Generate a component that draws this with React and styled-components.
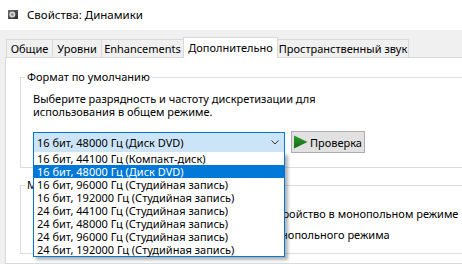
import React from 'react'
import styled, { createGlobalStyle } from 'styled-components'

const GlobalStyle = createGlobalStyle`
  * { box-sizing: border-box; }
  body {
    margin: 0;
    background: #ffffff;
    font-family: 'Noto Sans', 'Segoe UI', sans-serif;
    font-size: 11px;
    color: #000000;
  }
`

const tabs = [
  { label: 'Общие', width: 47 },
  { label: 'Уровни', width: 50 },
  { label: 'Enhancements', width: 83 },
  { label: 'Дополнительно', width: 95, active: true },
  { label: 'Пространственный звук', width: 132 },
]

const formats = [
  '16 бит, 44100 Гц (Компакт-диск)',
  '16 бит, 48000 Гц (Диск DVD)',
  '16 бит, 96000 Гц (Студийная запись)',
  '16 бит, 192000 Гц (Студийная запись)',
  '24 бит, 44100 Гц (Студийная запись)',
  '24 бит, 48000 Гц (Студийная запись)',
  '24 бит, 96000 Гц (Студийная запись)',
  '24 бит, 192000 Гц (Студийная запись)',
]

const Window = styled.div`
  width: 520px;
  height: 264px;
  overflow: hidden;
  display: flex;
  flex-direction: column;
`

const TitleBar = styled.div`
  height: 30px;
  flex-shrink: 0;
  background: #ffffff;
  display: flex;
  align-items: center;
  gap: 9px;
  padding-left: 8px;
  padding-bottom: 1px;
  font-size: 11.5px;
`

const Body = styled.div`
  flex: 1;
  background: #f0f0f0;
  padding: 7px 0 0 5px;
  display: flex;
  flex-direction: column;
`

const TabRow = styled.div`
  display: flex;
  align-items: flex-end;
  height: 20px;
  padding-left: 1px;
  position: relative;
  z-index: 1;
`

const Tab = styled.div`
  width: ${p => p.width}px;
  height: ${p => (p.active ? 21 : 18)}px;
  margin-left: -1px;
  margin-bottom: ${p => (p.active ? -1 : 0)}px;
  background: ${p => (p.active ? '#ffffff' : '#f0f0f0')};
  border: 1px solid #d9d9d9;
  border-bottom: none;
  display: flex;
  align-items: center;
  justify-content: center;
  line-height: 14px;
  white-space: nowrap;
  &:first-child { margin-left: 0; }
`

const Panel = styled.div`
  flex: 1;
  background: #ffffff;
  border: 1px solid #d9d9d9;
  padding: 0 0 0 14px;
`

const Group = styled.fieldset`
  margin: ${p => p.top}px 0 0 0;
  width: 470px;
  border: 1px solid #dcdcdc;
  padding: ${p => p.pad};
  min-inline-size: 0;
`

const Legend = styled.legend`
  margin-left: -8px;
  padding: 0 2px;
  line-height: 14px;
  white-space: nowrap;
`

const Description = styled.div`
  line-height: 13px;
`

const FormatRow = styled.div`
  display: flex;
  align-items: center;
  gap: 6px;
  margin-top: 13px;
`

const Combo = styled.div`
  position: relative;
  width: 252px;
  height: 21px;
  background: #cce4f7;
  border: 1px solid #0078d7;
  display: flex;
  align-items: center;
  justify-content: space-between;
  padding: 0 5px 0 3px;
  white-space: nowrap;
`

const List = styled.div`
  position: absolute;
  left: -1px;
  top: 100%;
  width: 252px;
  background: #ffffff;
  border: 1px solid #0078d7;
  border-top: none;
  box-shadow: 3px 3px 3px rgba(0, 0, 0, 0.3);
  z-index: 5;
`

const Option = styled.div`
  height: 13px;
  line-height: 13px;
  padding-left: 3px;
  white-space: nowrap;
  background: ${p => (p.selected ? '#0078d7' : 'transparent')};
  color: ${p => (p.selected ? '#ffffff' : '#000000')};
`

const TestButton = styled.div`
  width: 74px;
  height: 22px;
  background: #e1e1e1;
  border: 1px solid #adadad;
  display: flex;
  align-items: center;
  gap: 2px;
  padding-left: 1px;
  white-space: nowrap;
`

const CheckRow = styled.label`
  display: flex;
  align-items: center;
  gap: 5px;
  height: 14px;
  white-space: nowrap;
  & + & { margin-top: 7px; }
`

const Box = styled.span`
  width: 13px;
  height: 13px;
  border: 1px solid #333333;
  background: #ffffff;
  flex-shrink: 0;
`

function SpeakerIcon() {
  return (
    <svg width="10" height="9" viewBox="0 0 10 9">
      <defs>
        <linearGradient id="sp" x1="0" y1="0" x2="1" y2="1">
          <stop offset="0" stopColor="#6a6a6a" />
          <stop offset="1" stopColor="#2e2e2e" />
        </linearGradient>
      </defs>
      <rect x="0" y="0" width="10" height="9" fill="url(#sp)" />
      <circle cx="4.3" cy="4.6" r="3" fill="#d6d6d6" />
      <circle cx="4.3" cy="4.6" r="1.4" fill="#8a8a8a" />
    </svg>
  )
}

function Chevron() {
  return (
    <svg width="8" height="5" viewBox="0 0 8 5">
      <path d="M0.5 0.5 L4 4 L7.5 0.5" fill="none" stroke="#333333" strokeWidth="1" />
    </svg>
  )
}

function PlayIcon() {
  return (
    <svg width="15" height="14" viewBox="0 0 15 14">
      <defs>
        <linearGradient id="pl" x1="0" y1="0" x2="0" y2="1">
          <stop offset="0" stopColor="#2f9a2f" />
          <stop offset="1" stopColor="#136b13" />
        </linearGradient>
      </defs>
      <path d="M1 0.5 L14.5 7 L1 13.5 Z" fill="url(#pl)" />
    </svg>
  )
}

export default function App() {
  return (
    <>
      <GlobalStyle />
      <Window>
        <TitleBar>
          <SpeakerIcon />
          <span>Свойства: Динамики</span>
        </TitleBar>
        <Body>
          <TabRow>
            {tabs.map(t => (
              <Tab key={t.label} width={t.width} active={t.active}>
                {t.label}
              </Tab>
            ))}
          </TabRow>
          <Panel>
            <Group top={12} pad="8px 0 14px 12px">
              <Legend>Формат по умолчанию</Legend>
              <Description>
                Выберите разрядность и частоту дискретизации для
                <br />
                использования в общем режиме.
              </Description>
              <FormatRow>
                <Combo>
                  <span>16 бит, 48000 Гц (Диск DVD)</span>
                  <Chevron />
                  <List>
                    {formats.map((f, i) => (
                      <Option key={f} selected={i === 1}>
                        {f}
                      </Option>
                    ))}
                  </List>
                </Combo>
                <TestButton>
                  <PlayIcon />
                  Проверка
                </TestButton>
              </FormatRow>
            </Group>
            <Group top={10} pad="14px 0 12px 12px">
              <Legend>Монопольный режим</Legend>
              <CheckRow>
                <Box />
                Разрешить приложениям использовать устройство в монопольном режиме
              </CheckRow>
              <CheckRow>
                <Box />
                Предоставить приоритет приложениям монопольного режима
              </CheckRow>
            </Group>
          </Panel>
        </Body>
      </Window>
    </>
  )
}
